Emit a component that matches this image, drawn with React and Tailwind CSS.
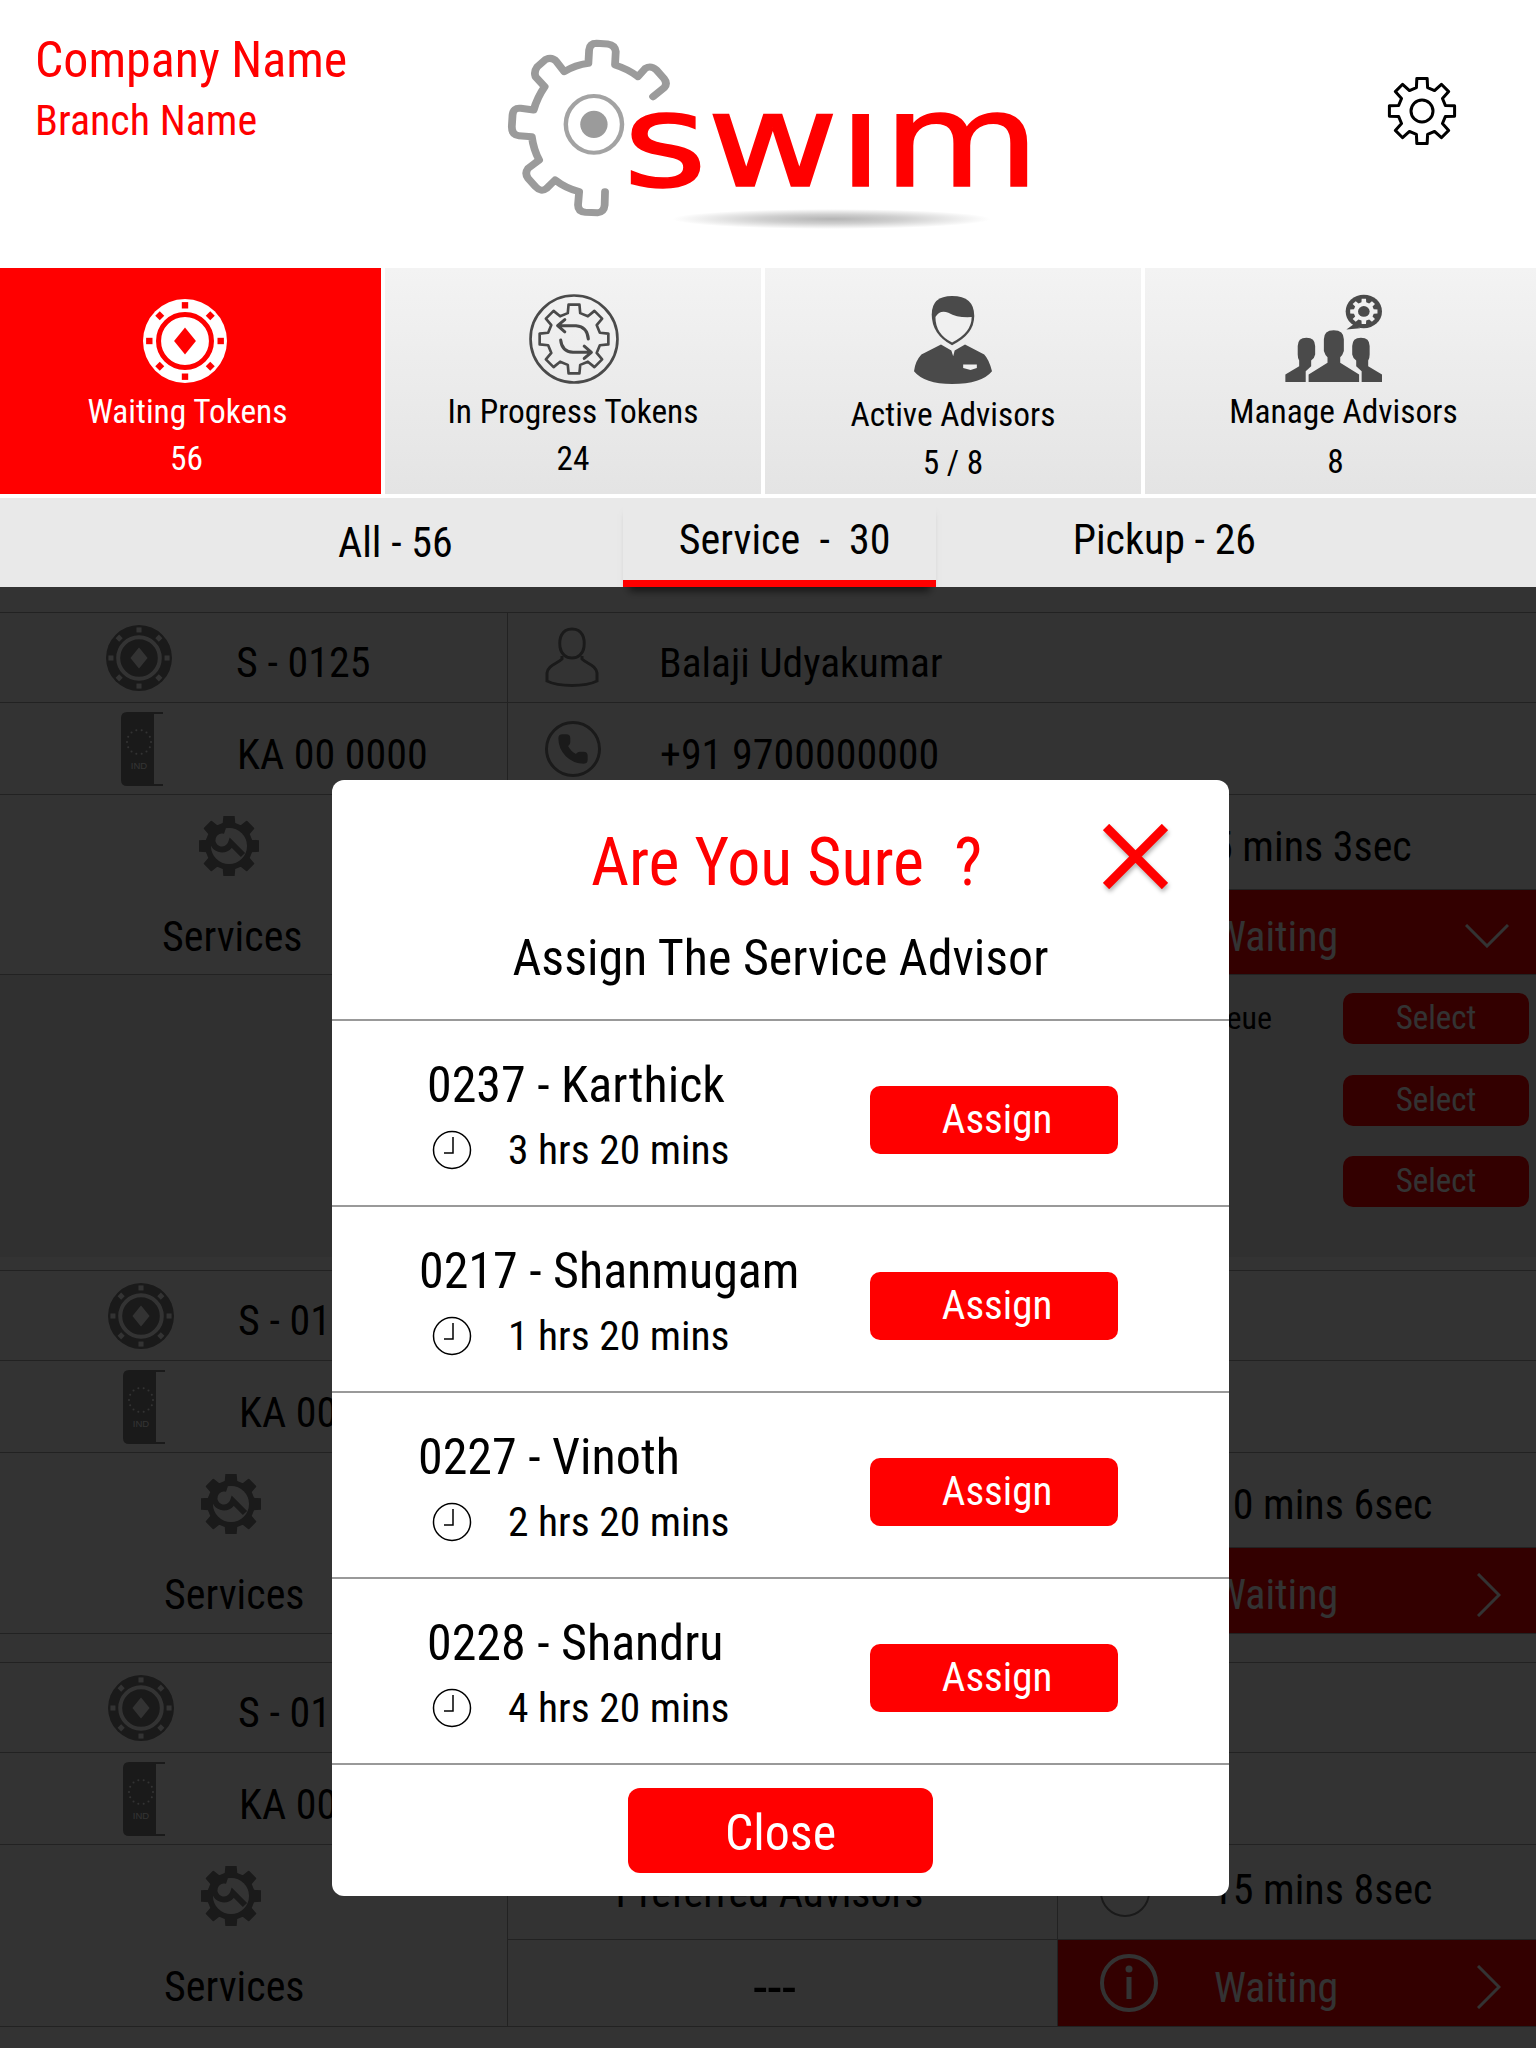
import { Phone } from "lucide-react";

const gearPoints = (cx, cy, rOut, rIn, teeth) => {
    const pts = [];
    const step = (Math.PI * 2) / teeth;
    for (let i = 0; i < teeth; i++) {
        const a = i * step - Math.PI / 2;
        const add = (r, da) => pts.push(`${(cx + r * Math.cos(a + da)).toFixed(2)},${(cy + r * Math.sin(a + da)).toFixed(2)}`);
        add(rIn, -step * 0.3);
        add(rOut, -step * 0.2);
        add(rOut, step * 0.2);
        add(rIn, step * 0.3);
    }
    return pts.join(" ");
};

const ChipIcon = ({ size, disk, detail }) => (
    <svg width={size} height={size} viewBox="0 0 100 100">
        <circle cx="50" cy="50" r="50" fill={disk} />
        <circle cx="50" cy="50" r="31.5" fill="none" stroke={detail} strokeWidth="6" />
        <polygon points="50,34 63,50 50,66 37,50" fill={detail} />
        {[0, 45, 90, 135, 180, 225, 270, 315].map((deg) => (
            <rect key={deg} x="46.2" y="3.7" width="7.6" height="7.6" fill={detail} transform={`rotate(${deg} 50 50)`} />
        ))}
    </svg>
);

const SwimLogo = () => (
    <svg width="580" height="230" viewBox="0 0 1568 690" preserveAspectRatio="none">
        <defs>
            <radialGradient id="logoShadow">
                <stop offset="0%" stopColor="#b4b4b4" />
                <stop offset="45%" stopColor="#cfcfcf" />
                <stop offset="100%" stopColor="#ffffff" />
            </radialGradient>
        </defs>
        <ellipse cx="950" cy="597" rx="430" ry="30" fill="url(#logoShadow)" />
        <path
            d="M468 230 L498 203 Q508 190 497 175 L477 150 Q462 135 447 145 L427 170 Q400 147 365 135 L367 95 Q365 75 345 72 L315 70 Q297 70 295 90 L293 130 Q258 135 228 155 L207 125 Q195 110 178 118 L155 140 Q145 155 150 170 L175 200 Q155 232 145 270 L110 265 Q90 262 88 285 L86 320 Q86 345 105 347 L140 350 Q145 390 160 420 L130 445 Q120 460 130 475 L150 500 Q165 518 180 505 L203 480 Q232 505 268 515 L265 555 Q265 575 285 577 L318 578 Q335 577 337 555 L338 515"
            fill="none"
            stroke="#9b9b9b"
            strokeWidth="21"
            strokeLinecap="round"
            strokeLinejoin="round"
        />
        <ellipse cx="308" cy="313" rx="76" ry="85" fill="none" stroke="#a3a3a3" strokeWidth="12" />
        <ellipse cx="308" cy="313" rx="37" ry="41" fill="#9b9b9b" />
        {/* dotless i on purpose, the mark has no dot */}
        <text x="387" y="497" fill="#ff0000" stroke="#ff0000" strokeWidth="5" fontFamily="'DejaVu Sans', sans-serif" fontSize="390" textLength="1126" lengthAdjust="spacingAndGlyphs">
            swım
        </text>
    </svg>
);

const SettingsIcon = () => (
    <svg width="72" height="72" viewBox="0 0 72 72" fill="none" stroke="#000" strokeWidth="3" strokeLinejoin="round">
        <polygon points={gearPoints(36, 36, 33, 24, 8)} />
        <circle cx="36" cy="36" r="11" />
    </svg>
);

const ProgressIcon = () => (
    <svg width="90" height="90" viewBox="0 0 88 88" fill="none" stroke="#4a4a4a" strokeWidth="2.6" strokeLinejoin="round" strokeLinecap="round">
        <circle cx="44" cy="44" r="42.5" />
        <polygon points={gearPoints(44, 44, 34, 26, 8)} />
        <path d="M58 44 Q57 32 46 31 H29 M35 25 L28 31 L35 37" strokeWidth="3" />
        <path d="M31 45 Q32 56 43 57 H60 M54 51 L61 57 L54 63" strokeWidth="3" />
    </svg>
);

const AdvisorIcon = () => (
    <svg width="78" height="88" viewBox="102 75 211 263" preserveAspectRatio="none">
        <path d="M150 130 Q150 75 205 75 Q265 75 265 135 Q265 190 205 222 Q150 190 150 130 Z" fill="#4a4a4a" />
        <path d="M160 138 Q172 115 195 125 Q220 141 258 138 Q258 185 205 214 Q160 190 160 138 Z" fill="#f0f0f0" />
        <path d="M175 220 L122 250 Q105 270 102 300 Q130 338 205 338 Q285 338 313 300 Q305 265 292 250 L240 220 L212 238 L208 255 L203 238 Z" fill="#4a4a4a" />
        <polygon points="235,280 272,280 272,290 255,296 235,290" fill="#f0f0f0" />
    </svg>
);

const ManageIcon = () => (
    <svg width="97" height="88" viewBox="1133 70 267 262" preserveAspectRatio="none">
        <path d="M1168 225 Q1168 200 1192 200 Q1216 200 1216 225 V250 Q1214 262 1205 268 V285 L1190 300 V332 H1134 V310 L1172 285 V268 Q1168 262 1168 250 Z" fill="#4a4a4a" />
        <path d="M1366 225 Q1366 200 1342 200 Q1318 200 1318 225 V250 Q1320 262 1329 268 V285 L1344 300 V332 H1400 V310 L1362 285 V268 Q1366 262 1366 250 Z" fill="#4a4a4a" />
        <path d="M1240 205 Q1240 178 1267 178 Q1295 178 1295 205 V240 Q1292 252 1285 258 V275 L1337 310 V332 H1198 V310 L1250 275 V258 Q1243 252 1240 240 Z" fill="#4a4a4a" />
        <circle cx="1350" cy="122" r="50" fill="#4a4a4a" />
        <polygon points="1322,160 1302,176 1340,172" fill="#4a4a4a" />
        <polygon points={gearPoints(1350, 122, 38, 28, 8)} fill="#f0f0f0" />
        <circle cx="1350" cy="122" r="16" fill="#4a4a4a" />
    </svg>
);

const PlateIcon = () => (
    <svg width="42" height="74" viewBox="0 0 42 74" className="ml-[3px]">
        <path d="M6 0 H33 V74 H6 Q0 74 0 68 V6 Q0 0 6 0 Z" fill="#808080" />
        <path d="M33 1 H42 M33 73 H42" stroke="#808080" strokeWidth="2" />
        {Array.from({ length: 14 }).map((_, i) => (
            <circle
                key={i}
                cx={18 + 12 * Math.cos((i * Math.PI) / 7)}
                cy={30 + 12 * Math.sin((i * Math.PI) / 7)}
                r="1"
                fill="#fff"
            />
        ))}
        <text x="18" y="57" textAnchor="middle" fontSize="9.5" fill="#fff" fontFamily="'Liberation Sans', sans-serif">IND</text>
    </svg>
);

const WrenchGear = () => (
    <svg width="60" height="60" viewBox="0 0 60 60">
        <polygon points={gearPoints(30, 30, 30, 23, 8)} fill="#808080" stroke="#808080" strokeWidth="2" strokeLinejoin="round" />
        <circle cx="30" cy="30" r="18" fill="#fff" />
        <path d="M26 15 A9.5 9.5 0 1 0 32 27 L44 39" fill="none" stroke="#808080" strokeWidth="6" />
    </svg>
);

const PersonIcon = () => (
    <svg width="54" height="62" viewBox="0 0 54 62" fill="none" stroke="#808080" strokeWidth="3">
        <path d="M27 2 C38 2 40 12 39 20 C38 27 33 31 27 31 C21 31 16 27 15 20 C14 12 16 2 27 2 Z" />
        <path d="M17 29 V32 C12 37 3 38 2 46 V54 C14 60 40 60 52 54 V46 C51 38 42 37 37 32 V29" />
    </svg>
);

const PhoneIcon = () => (
    <div className="flex h-[56px] w-[56px] items-center justify-center rounded-full border-[3px] border-[#808080]">
        <Phone size={32} fill="#808080" stroke="#808080" />
    </div>
);

const ClockSmall = () => (
    <svg width="40" height="40" viewBox="0 0 40 40" fill="none" stroke="#000" strokeWidth="1.5">
        <circle cx="20" cy="20" r="18.5" />
        <path d="M21 7 V23 H12" />
    </svg>
);

const InfoIcon = () => (
    <svg width="58" height="60" viewBox="0 0 58 60" fill="none" stroke="#fff" strokeWidth="4">
        <circle cx="29" cy="30" r="27" />
        <circle cx="29" cy="16" r="3.5" fill="#fff" stroke="none" />
        <rect x="26.5" y="24" width="5" height="22" fill="#fff" stroke="none" />
    </svg>
);

const tabs = [
    { label: "Waiting Tokens", count: "56", active: true, icon: <ChipIcon size={84} disk="#fff" detail="#ff0000" />, iconClass: "pr-[12px] pt-[2px]", labelClass: "pr-[6px]", countClass: "pr-[8px]" },
    { label: "In Progress Tokens", count: "24", icon: <ProgressIcon />, iconClass: "pl-[2px] pb-[2px]", labelClass: "", countClass: "" },
    { label: "Active Advisors", count: "5 / 8", icon: <AdvisorIcon />, iconClass: "", labelClass: "pt-[3px]", countClass: "pt-[1px]" },
    { label: "Manage Advisors", count: "8", icon: <ManageIcon />, iconClass: "pr-[15px] pb-[5px]", labelClass: "pl-[6px]", countClass: "pt-[3px] pr-[10px]" },
];

const advisors = [
    { name: "0237 - Karthick", time: "3 hrs 20 mins", nameClass: "pl-[95px]" },
    { name: "0217 - Shanmugam", time: "1 hrs 20 mins", nameClass: "pl-[87px]" },
    { name: "0227 - Vinoth", time: "2 hrs 20 mins", nameClass: "pl-[86px]" },
    { name: "0228 - Shandru", time: "4 hrs 20 mins", nameClass: "pl-[95px]" },
];

const Card = ({ token, elapsed, name, phone, preferred, open, bottomRow, leftPad, timeClass }) => (
    <div className="border-t border-[#aaa]">
        <div className="flex h-[90px] border-b border-[#aaa]">
            <div className={`flex w-[508px] items-center border-r border-[#aaa] ${leftPad}`}>
                <div className="ml-[106px]"><ChipIcon size={66} disk="#808080" detail="#fff" /></div>
                <span className="ml-[64px] pt-[10px] text-[42px] leading-[50px]">{token}</span>
            </div>
            <div className="flex flex-1 items-center">
                <div className="ml-[37px]"><PersonIcon /></div>
                {name && <span className="ml-[60px] pt-[10px] text-[41.5px] leading-[50px]">{name}</span>}
            </div>
        </div>
        <div className="flex h-[92px] border-b border-[#aaa]">
            <div className={`flex w-[508px] items-center border-r border-[#aaa] ${leftPad}`}>
                <div className="ml-[118px]"><PlateIcon /></div>
                <span className="ml-[74px] pt-[12px] text-[42px] leading-[50px]">KA 00 0000</span>
            </div>
            <div className="flex flex-1 items-center">
                <div className="ml-[37px]"><PhoneIcon /></div>
                {phone && <span className="ml-[59px] pt-[12px] text-[42px] leading-[50px]">{phone}</span>}
            </div>
        </div>
        <div className="flex border-b border-[#aaa]">
            <div className={`w-[508px] border-r border-[#aaa] pt-[21px] ${leftPad}`}>
                <div className="pl-[199px]"><WrenchGear /></div>
                <div className="mt-[37px] pl-[162px] text-[42px] leading-[48px]">Services</div>
            </div>
            <div className="flex-1">
                <div className="flex h-[95px] border-b border-[#aaa]">
                    <div className="flex w-[550px] items-center justify-center border-r border-[#aaa] pr-[26px] text-[42px]">{preferred && "Preferred Advisors"}</div>
                    <div className="flex flex-1 items-center">
                        <div className="ml-[42px] h-[50px] w-[50px] rounded-full border-2 border-[#808080]" />
                        <span className={`ml-[62px] text-[42px] leading-[50px] ${timeClass}`}>{elapsed}</span>
                    </div>
                </div>
                <div className={`flex ${bottomRow}`}>
                    <div className="flex w-[550px] items-center justify-center border-r border-[#aaa] pr-[16px] pt-[8px] text-[58px] leading-[50px]">{preferred && "---"}</div>
                    <div className="flex flex-1 items-center bg-[#ff0000] text-white">
                        <div className="ml-[42px]"><InfoIcon /></div>
                        <span className="ml-[56px] pt-[9px] text-[42px] leading-[50px]">Waiting</span>
                        {open ? (
                            <svg className="ml-auto mr-[27px] mt-[8px]" width="44" height="24" viewBox="0 0 44 24" fill="none" stroke="#fff" strokeWidth="3">
                                <path d="M1 1 L22 22 L43 1" />
                            </svg>
                        ) : (
                            <svg className="ml-auto mr-[35px] mt-[8px]" width="24" height="44" viewBox="0 0 24 44" fill="none" stroke="#fff" strokeWidth="3">
                                <path d="M1 1 L22 22 L1 43" />
                            </svg>
                        )}
                    </div>
                </div>
            </div>
        </div>
        {open && (
            <div className="h-[282px] bg-[#f0f0f0]">
                {["Queue", "", ""].map((label, idx) => (
                    <div key={idx} className="flex h-[81px] items-center justify-end border-b border-[#eee] pr-[7px] first:h-[85px] first:pt-[2px]">
                        {label && <span className="mr-[71px] text-[32px]">{label}</span>}
                        <button className="h-[51px] w-[186px] rounded-[10px] bg-[#ff0000] text-[33px] text-white">Select</button>
                    </div>
                ))}
            </div>
        )}
    </div>
);

const App = () => {
    return (
        <div className="h-[2048px] overflow-hidden bg-white font-['Roboto_Condensed','Roboto',sans-serif] [font-stretch:75%] text-black">
            {/* header */}
            <div className="flex h-[268px]">
                <div className="w-[480px] pl-[35px] pt-[30px] text-[#ff0000]">
                    <div className="text-[50px] leading-[60px]">Company Name</div>
                    <div className="pt-[3px] text-[42px] leading-[56px]">Branch Name</div>
                </div>
                <div className="pt-[20px]"><SwimLogo /></div>
                <div className="pl-[326px] pt-[75px]"><SettingsIcon /></div>
            </div>

            {/* top tabs */}
            <div className="grid h-[226px] grid-cols-[381px_376px_376px_1fr] gap-x-1">
                {tabs.map((tab) => (
                    <div
                        key={tab.label}
                        className={`flex flex-col items-center pt-[24px] ${tab.active ? "bg-[#ff0000] text-white" : "bg-gradient-to-b from-[#f3f3f3] to-[#e4e4e4]"}`}
                    >
                        <div className={`flex h-[96px] items-center justify-center ${tab.iconClass}`}>{tab.icon}</div>
                        <div className={`mt-[4px] text-[33.4px] leading-[40px] ${tab.labelClass}`}>{tab.label}</div>
                        <div className={`mt-[7px] text-[33.4px] leading-[40px] ${tab.countClass}`}>{tab.count}</div>
                    </div>
                ))}
            </div>

            {/* service filter */}
            <div className="relative mt-1 flex h-[89px] bg-[#e9e9e9] text-[42px]">
                <div className="ml-[338px] flex items-center">All - 56</div>
                <div className="ml-[170px] flex w-[313px] items-center justify-center whitespace-pre border-b-[7px] border-[#ff0000] pl-[11px] shadow-[0_10px_8px_-6px_rgba(0,0,0,0.6)]">Service  -  30</div>
                <div className="ml-[137px] flex items-center pb-[7px]">Pickup - 26</div>
            </div>

            {/* token list + assign dialog */}
            <div className="relative h-[1461px] overflow-hidden pt-[25px]">
                <Card token="S - 0125" elapsed="5 mins 3sec" name="Balaji Udyakumar" phone="+91 9700000000" open bottomRow="h-[84px]" leftPad="pl-0" timeClass="pt-[10px]" />
                <div className="h-[13px]" />
                <Card token="S - 0126" elapsed="10 mins 6sec" bottomRow="h-[85px]" leftPad="pl-[2px]" timeClass="pt-[10px]" />
                <div className="h-[28px]" />
                <Card token="S - 0127" elapsed="15 mins 8sec" preferred bottomRow="h-[86px]" leftPad="pl-[2px]" timeClass="pb-[4px]" />

                <div className="absolute inset-0 bg-black/80 pl-[332px] pt-[193px]">
                    <div className="relative h-[1116px] w-[897px] rounded-xl bg-white">
                        <div className="h-[239px] pt-[47px] text-center">
                            <div className="whitespace-pre pl-[12px] text-[66px] leading-[72px] text-[#ff0000]">Are You Sure  ?</div>
                            <div className="mt-[29px] text-[50px] leading-[60px]">Assign The Service Advisor</div>
                        </div>
                        <svg className="absolute left-[771px] top-[44px] drop-shadow-[1px_3px_2px_rgba(0,0,0,0.3)]" width="65" height="65" viewBox="0 0 65 65" stroke="#ff0000" strokeWidth="9">
                            <path d="M3 3 L62 62 M62 3 L3 62" />
                        </svg>
                        {advisors.map((advisor) => (
                            <div key={advisor.name} className="flex h-[186px] border-t-2 border-[#999]">
                                <div className="w-[538px] pt-[36px]">
                                    <div className={`text-[50px] leading-[56px] ${advisor.nameClass}`}>{advisor.name}</div>
                                    <div className="mt-[15px] flex h-[44px] items-center pl-[100px]">
                                        <ClockSmall />
                                        <span className="ml-[36px] text-[41.5px]">{advisor.time}</span>
                                    </div>
                                </div>
                                <button className="mt-[65px] h-[68px] w-[248px] rounded-[10px] bg-[#ff0000] pl-[6px] text-[41px] text-white">Assign</button>
                            </div>
                        ))}
                        <div className="flex justify-center border-t-2 border-[#999] pt-[23px]">
                            <button className="h-[85px] w-[305px] rounded-xl bg-[#ff0000] pt-[6px] text-[50px] text-white">Close</button>
                        </div>
                    </div>
                </div>
            </div>
        </div>
    );
};

export default App;
